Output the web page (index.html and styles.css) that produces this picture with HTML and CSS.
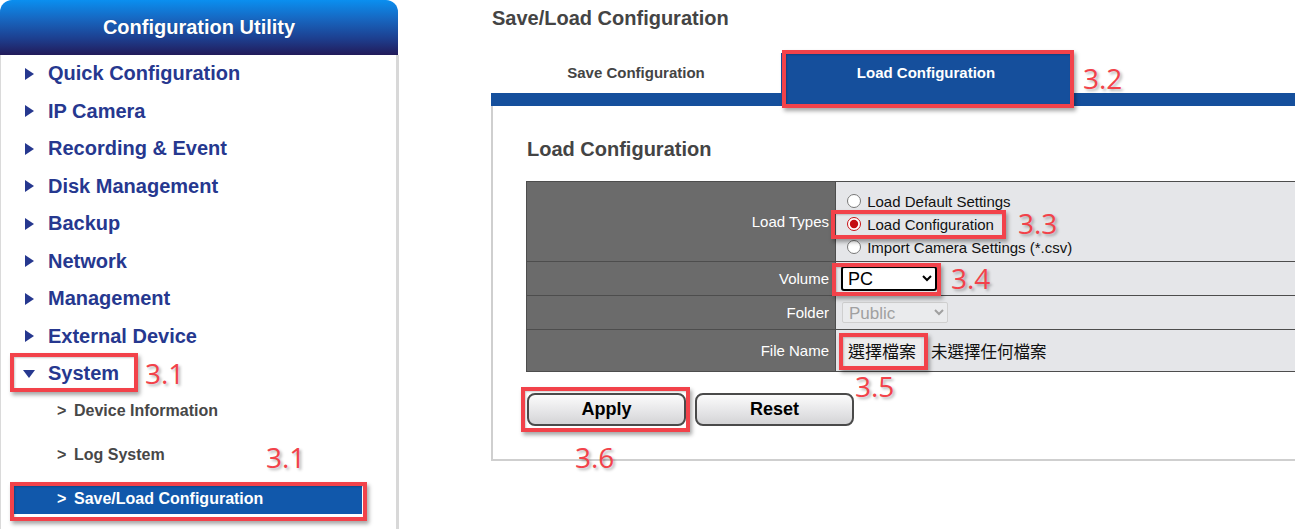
FILE: index.html
```html
<!DOCTYPE html>
<html lang="zh-Hant">
<head>
<meta charset="utf-8">
<title>Save/Load Configuration</title>
<link rel="stylesheet" href="styles.css">
</head>
<body>
<div class="page">
  <aside class="sidebar">
    <div class="sb-head">Configuration Utility</div>
    <div class="sb-body">
      <ul class="menu">
        <li class="menu-item"><span class="tri"></span>Quick Configuration</li>
        <li class="menu-item"><span class="tri"></span>IP Camera</li>
        <li class="menu-item"><span class="tri"></span>Recording &amp; Event</li>
        <li class="menu-item"><span class="tri"></span>Disk Management</li>
        <li class="menu-item"><span class="tri"></span>Backup</li>
        <li class="menu-item"><span class="tri"></span>Network</li>
        <li class="menu-item"><span class="tri"></span>Management</li>
        <li class="menu-item"><span class="tri"></span>External Device</li>
        <li class="menu-item open"><span class="tri down"></span>System</li>
      </ul>
      <ul class="submenu">
        <li class="sub-item"><span class="gt">&gt;</span>Device Information</li>
        <li class="sub-item"><span class="gt">&gt;</span>Log System</li>
        <li class="sub-item active"><span class="gt">&gt;</span>Save/Load Configuration</li>
      </ul>
    </div>
  </aside>

  <main class="main">
    <h1 class="title">Save/Load Configuration</h1>
    <div class="tabs">
      <div class="tab">Save Configuration</div>
      <div class="tab active">Load Configuration</div>
    </div>
    <div class="tabbar"></div>
    <section class="panel">
      <h2 class="panel-title">Load Configuration</h2>
      <table class="form">
        <tr class="row-types">
          <td class="label">Load Types</td>
          <td class="value">
            <label class="radio-line"><input type="radio" name="lt"> Load Default Settings</label>
            <label class="radio-line"><input type="radio" name="lt" checked> Load Configuration</label>
            <label class="radio-line"><input type="radio" name="lt"> Import Camera Settings (*.csv)</label>
          </td>
        </tr>
        <tr class="row-vol">
          <td class="label">Volume</td>
          <td class="value"><select class="sel-vol"><option>PC</option></select></td>
        </tr>
        <tr class="row-folder">
          <td class="label">Folder</td>
          <td class="value"><select class="sel-folder" disabled><option>Public</option></select></td>
        </tr>
        <tr class="row-file">
          <td class="label">File Name</td>
          <td class="value"><span class="file-btn">選擇檔案</span><span class="file-none">未選擇任何檔案</span></td>
        </tr>
      </table>
      <div class="actions">
        <button class="btn" type="button">Apply</button>
        <button class="btn" type="button">Reset</button>
      </div>
    </section>
  </main>

  <div class="annotations">
    <div class="mark m-system"></div>
    <div class="num n-31a">3.1</div>
    <div class="mark m-saveload"></div>
    <div class="num n-31b">3.1</div>
    <div class="mark m-tab"></div>
    <div class="num n-32">3.2</div>
    <div class="mark m-radio"></div>
    <div class="num n-33">3.3</div>
    <div class="mark m-vol"></div>
    <div class="num n-34">3.4</div>
    <div class="mark m-file"></div>
    <div class="num n-35">3.5</div>
    <div class="mark m-apply"></div>
    <div class="num n-36">3.6</div>
  </div>
</div>
</body>
</html>
```

FILE: styles.css
```css
html, body {
  margin: 0;
  padding: 0;
  height: 100%;
  overflow: hidden;
  background: #fff;
  font-family: "Liberation Sans", Arial, sans-serif;
}

.page {
  position: relative;
  display: flex;
  height: 529px;
}

/* ---------- Sidebar ---------- */
.sidebar {
  width: 399px;
  flex: none;
  display: flex;
  flex-direction: column;
}

.sb-head {
  width: 398px;
  height: 55px;
  border-radius: 12px 12px 0 0;
  background: linear-gradient(#0a8ff0 0%, #1766c0 35%, #1d3f8f 70%, #221b5a 100%);
  color: #fff;
  font-weight: bold;
  font-size: 20px;
  line-height: 55px;
  text-align: center;
  text-shadow: 0 0 1px rgba(0,0,0,.3);
}

.sb-body {
  flex: 1;
  border-left: 1px solid #dadada;
  border-right: 3px solid #d8d8d8;
}

.menu, .submenu {
  list-style: none;
  margin: 0;
  padding: 0;
}

.menu-item {
  display: flex;
  align-items: center;
  height: 37.5px;
  padding-left: 24px;
  font-size: 20px;
  font-weight: bold;
  color: #26388f;
}

.tri {
  width: 0;
  height: 0;
  border-left: 9px solid #26388f;
  border-top: 6px solid transparent;
  border-bottom: 6px solid transparent;
  margin-right: 14px;
}

.tri.down {
  border-left: 6px solid transparent;
  border-right: 6px solid transparent;
  border-top: 8px solid #26388f;
  border-bottom: 0;
  margin-left: -2px;
  margin-right: 13px;
}

.submenu {
  margin-top: 3px;
}

.sub-item {
  height: 30px;
  line-height: 30px;
  margin: 0 0 14px 13px;
  width: 348px;
  box-sizing: border-box;
  padding-left: 43px;
  font-size: 16px;
  font-weight: bold;
  color: #474747;
}

.sub-item .gt {
  display: inline-block;
  width: 17px;
}

.sub-item.active {
  background: #1158ab;
  color: #fff;
}

/* ---------- Main ---------- */
.main {
  flex: 1;
  min-width: 0;
  padding: 6px 0 0 92px;
  overflow: hidden;
}

.title {
  margin: 0 0 23px 1px;
  font-size: 20px;
  line-height: 24px;
  font-weight: bold;
  color: #444;
}

.tabs {
  display: flex;
  height: 40px;
}

.tab {
  width: 290px;
  text-align: center;
  font-size: 15px;
  font-weight: bold;
  line-height: 40px;
  color: #444;
}

.tab.active {
  background: #154f9c;
  color: #fff;
}

.tabbar {
  height: 13px;
  background: #154f9c;
}

.panel {
  border-left: 2px solid #cfcfcf;
  border-bottom: 2px solid #cfcfcf;
  padding: 31px 0 33px 33px;
}

.panel-title {
  margin: 0 0 20px 1px;
  font-size: 20px;
  line-height: 24px;
  font-weight: bold;
  color: #444;
}

.form {
  border-collapse: collapse;
  width: 820px;
  font-size: 15px;
}

.form td {
  border: 1px solid #4d4d4d;
  padding: 0;
  box-sizing: border-box;
}

.form .label {
  width: 309px;
  background: #6b6b6b;
  color: #fff;
  text-align: right;
  padding-right: 6px;
}

.form .value {
  background: #e5e6e9;
  color: #111;
  padding-left: 6px;
}

.row-types td { height: 80px; }
.row-vol td { height: 34px; }
.row-folder td { height: 34px; }
.row-file td { height: 42px; }

.row-types .value {
  padding-top: 8px;
  padding-bottom: 0;
  vertical-align: top;
}

.radio-line {
  display: block;
  line-height: 23px;
}

.radio-line input {
  accent-color: #c40d12;
  width: 14px;
  height: 14px;
  margin: 2px 2px 0 5px;
  vertical-align: -1px;
}

.sel-vol {
  box-sizing: border-box;
  width: 96px;
  height: 25px;
  margin-left: -1px;
  border: 2px solid #000;
  border-radius: 3px;
  background: #fff;
  color: #000;
  font-family: "Liberation Sans", Arial, sans-serif;
  font-size: 18px;
  padding: 0 1px;
  vertical-align: middle;
}

.sel-folder {
  box-sizing: border-box;
  width: 106px;
  height: 21px;
  border: 1px solid #cfcfcf;
  border-radius: 2px;
  background: #eaebed;
  color: #a0a0a0;
  font-family: "Liberation Sans", Arial, sans-serif;
  font-size: 17px;
  padding: 0 2px;
  opacity: 1;
  vertical-align: middle;
}

.file-btn {
  display: inline-block;
  margin-left: 1px;
  padding: 0 5px;
  height: 30px;
  line-height: 30px;
  background: #ececec;
  border-radius: 2px;
  font-family: "Noto Sans CJK TC", "Liberation Sans", sans-serif;
  font-size: 17px;
  color: #111;
  vertical-align: middle;
}

.file-none {
  margin-left: 10px;
  font-family: "Noto Sans CJK TC", "Liberation Sans", sans-serif;
  font-size: 16.5px;
  color: #111;
  vertical-align: middle;
}

.actions {
  display: flex;
  gap: 9px;
  margin-top: 21px;
  margin-left: 1px;
}

.btn {
  box-sizing: border-box;
  width: 159px;
  height: 33px;
  border: 2px solid #4a4a4a;
  border-radius: 8px;
  background: linear-gradient(#fbfbfb, #e4e4e6 60%, #d4d4d6);
  font-family: "Liberation Sans", Arial, sans-serif;
  font-size: 18px;
  font-weight: bold;
  color: #000;
  padding: 0;
}

/* ---------- Annotation overlay ---------- */
.annotations {
  position: absolute;
  inset: 0;
  pointer-events: none;
}

.mark {
  position: absolute;
  box-sizing: border-box;
  border: 4px solid #f2424a;
  box-shadow: 2px 3px 4px rgba(0,0,0,.35), inset 1px 1px 2px rgba(0,0,0,.2);
}

.num {
  position: absolute;
  font-family: "Open Sans", "Noto Sans", sans-serif;
  font-size: 28px;
  line-height: 28px;
  color: #f2424a;
  text-shadow: 2px 2px 3px rgba(0,0,0,.3);
}

.m-system   { left: 10px;  top: 353px; width: 128px; height: 39px; }
.m-saveload { left: 10px;  top: 482px; width: 357px; height: 39px; }
.m-tab      { left: 782px; top: 50px;  width: 292px; height: 58px; }
.m-radio    { left: 831px; top: 210px; width: 175px; height: 29px; }
.m-vol      { left: 832px; top: 263px; width: 109px; height: 33px; }
.m-file     { left: 839px; top: 333px; width: 89px;  height: 37px; }
.m-apply    { left: 521px; top: 387px; width: 169px; height: 45px; }

.n-31a { left: 145px;  top: 359px; }
.n-31b { left: 266px;  top: 443px; }
.n-32  { left: 1083px; top: 64px; }
.n-33  { left: 1018px; top: 209px; }
.n-34  { left: 951px;  top: 264px; }
.n-35  { left: 855px;  top: 372px; }
.n-36  { left: 575px;  top: 443px; }
```
